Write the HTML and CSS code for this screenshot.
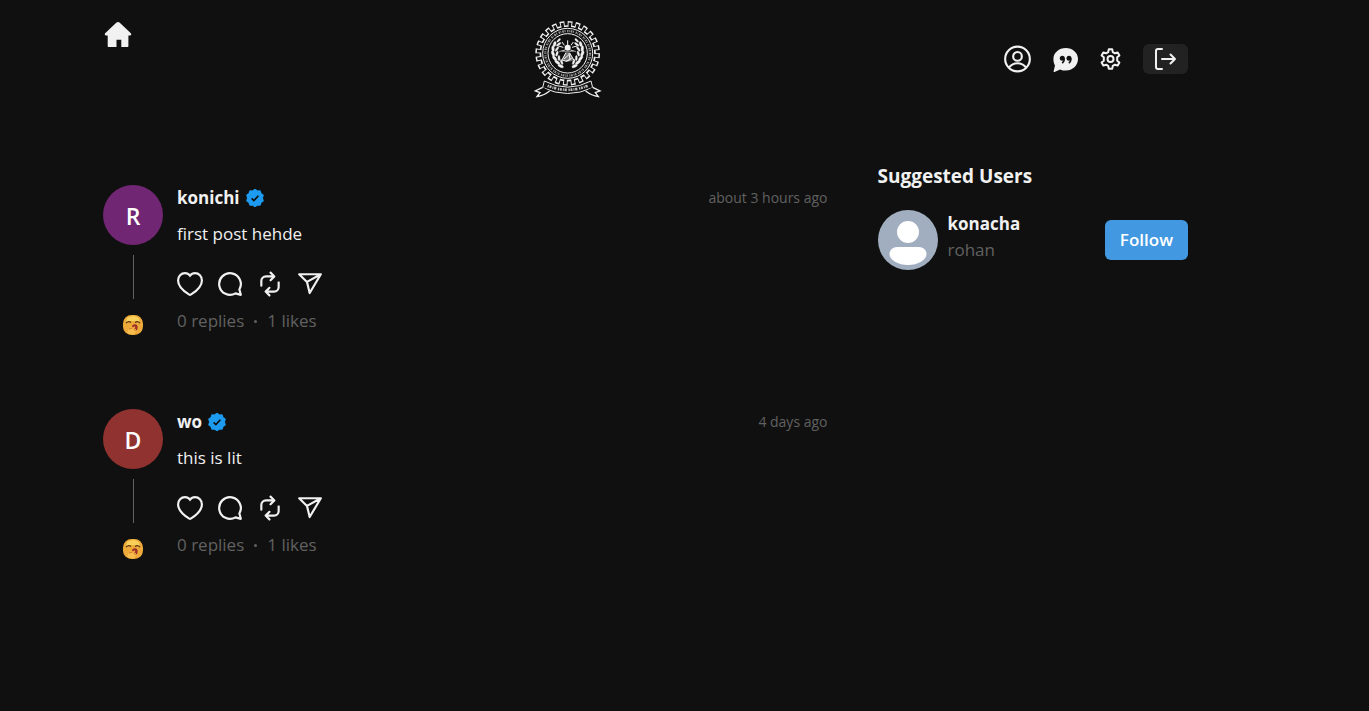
FILE: index.html
```html
<!DOCTYPE html>
<html lang="en">
<head>
<meta charset="utf-8">
<meta name="viewport" content="width=device-width, initial-scale=1">
<title>Home</title>
<link rel="stylesheet" href="styles.css">
</head>
<body>
<svg class="defs" aria-hidden="true">
  <symbol id="verified" viewBox="0 0 24 24"><path fill="#1d9bf0" d="M12 1l2.9 2.1 3.6-.1 1 3.4L22.4 8.500 21.200 12l1.200 3.500-2.900 2.100-1 3.400-3.600-.1L12 23l-2.900-2.100-3.600.1-1-3.400-2.900-2.100L2.800 12 1.600 8.500l2.900-2.100 1-3.400 3.600.1z" stroke="#1d9bf0" stroke-width="2.500" stroke-linejoin="round"/><path d="M7.500 12.500l3 3L16.500 9" fill="none" stroke="#101010" stroke-width="2.200"/></symbol>
  <symbol id="heart" viewBox="0 0 24 22"><path d="M1 7.66c0 4.575 3.899 9.086 9.987 12.934.338.203.74.406 1.013.406.283 0 .686-.203 1.013-.406C19.1 16.746 23 12.234 23 7.66 23 3.736 20.245 1 16.672 1 14.603 1 12.98 1.94 12 3.352 11.042 1.952 9.408 1 7.328 1 3.766 1 1 3.736 1 7.66Z" fill="none" stroke="currentColor" stroke-width="2"/></symbol>
  <symbol id="comment" viewBox="0 0 24 24"><path d="M20.656 17.008a9.993 9.993 0 1 0-3.59 3.615L22 22Z" fill="none" stroke="currentColor" stroke-width="2" stroke-linejoin="round"/></symbol>
  <symbol id="repost" viewBox="0 0 24 24"><path fill="currentColor" d="M19.998 9.497a1 1 0 0 0-1 1v4.228a3.274 3.274 0 0 1-3.27 3.27h-5.313l1.791-1.787a1 1 0 0 0-1.412-1.416L7.29 18.287a1.004 1.004 0 0 0-.294.707v.001c0 .023.012.042.013.065a.923.923 0 0 0 .281.643l3.502 3.504a1 1 0 0 0 1.414-1.414l-1.797-1.798h5.318a5.276 5.276 0 0 0 5.27-5.27v-4.228a1 1 0 0 0-1-1Zm-6.41-3.496-1.795 1.795a1 1 0 1 0 1.414 1.414l3.5-3.5a1.003 1.003 0 0 0 0-1.417l-3.5-3.5a1 1 0 0 0-1.414 1.414l1.794 1.794H8.27A5.277 5.277 0 0 0 3 9.271V13.5a1 1 0 0 0 2 0V9.271a3.275 3.275 0 0 1 3.271-3.27Z"/></symbol>
  <symbol id="share" viewBox="0 0 24 24"><path d="M22 3 9.218 10.083M11.698 20.334 22 3H2l7.218 7.084z" fill="none" stroke="currentColor" stroke-width="2" stroke-linejoin="round"/></symbol>
  <symbol id="yawn" viewBox="0 0 20 20"><rect width="20" height="20" rx="8.500" fill="#edaa38"/><path d="M4 3Q10-1 16 3L17 8Q10 4 3 8z" fill="#f8cf59"/><path d="M3 8q2.500-2.500 5-.6M12 7.400q2.500-1.900 5 .6" fill="none" stroke="#593316" stroke-width="1.300"/><ellipse cx="11.800" cy="12.500" rx="2.800" ry="3.200" fill="#9b3029"/><path d="M5 19q-1-5 2.500-6.500l4.500-1q1 1.200-1 1.800 2.500.5 2 2.200 0 2.500-3 4z" fill="#f6bd4c"/><path d="M6 14l4.500-1.300M11 14l1.500 2" stroke="#d67b2a" stroke-width="1" fill="none"/></symbol>
  <symbol id="leaves" viewBox="0 0 60 100"><g fill="#f1f1f1"><ellipse cx="31" cy="89" rx="9" ry="4" transform="rotate(25 31 89)"/><ellipse cx="21" cy="78" rx="9" ry="4" transform="rotate(35 21 78)"/><ellipse cx="13" cy="66" rx="9" ry="4" transform="rotate(50 13 66)"/><ellipse cx="8" cy="52" rx="9" ry="4" transform="rotate(66 8 52)"/><ellipse cx="8" cy="37" rx="9" ry="4" transform="rotate(86 8 37)"/><ellipse cx="13" cy="23" rx="8" ry="4" transform="rotate(108 13 23)"/><ellipse cx="34" cy="77" rx="8" ry="3" transform="rotate(70 34 77)"/><ellipse cx="26" cy="65" rx="8" ry="3" transform="rotate(88 26 65)"/><ellipse cx="20" cy="52" rx="8" ry="3" transform="rotate(108 20 52)"/><ellipse cx="20" cy="38" rx="8" ry="3" transform="rotate(125 20 38)"/><ellipse cx="25" cy="24" rx="8" ry="3" transform="rotate(142 25 24)"/><ellipse cx="25" cy="12" rx="7" ry="3" transform="rotate(135 25 12)"/></g></symbol>
</svg>
<div class="page">
  <header class="header">
    <a class="home" href="#" aria-label="Home"><svg viewBox="0 0 30 28"><path fill="currentColor" d="M15 2c.6 0 1 .2 1.500.6L27.600 13c1.200 1.200.7 2.400-.6 2.400h-1.600V26c0 .7-.4 1-1 1h-6.100v-7.200h-4.800V27H5.700c-.7 0-1-.4-1-1V15.400H3c-1.300 0-1.700-1.300-.6-2.400L13.500 2.600C14 2.200 14.400 2 15 2z"/></svg></a>
    <button class="logo" type="button" aria-label="Toggle theme">
      <svg viewBox="45 30 204 234" fill="none" stroke="#f1f1f1">
        <circle cx="143" cy="130" r="89" stroke-width="16" pathLength="240" stroke-dasharray="6 4"/>
        <circle cx="143" cy="130" r="82" stroke-width="5"/>
        <circle cx="143" cy="130" r="84" stroke="#101010" stroke-width="17" pathLength="240" stroke-dasharray="3.600 6.400" stroke-dashoffset="-1.200"/>
        <circle cx="143" cy="130" r="75" stroke-width="3"/>
        <circle cx="143" cy="130" r="67" stroke-width="7" stroke="#999" stroke-dasharray="4 2 2 3 5 2 3 5"/>
        <circle cx="143" cy="130" r="59" stroke-width="3"/>
        <use href="#leaves" x="91" y="79" width="60" height="100"/>
        <use href="#leaves" x="91" y="79" width="60" height="100" transform="translate(286 0) scale(-1 1)"/>
        <path d="M143 91v14M126 96l7 10M160 96l-7 10M115 108l15 4M171 108l-15 4M119 125l16-5M167 125l-16-5" stroke-width="3"/>
        <circle cx="143" cy="113" r="9" fill="#f1f1f1" stroke="none"/>
        <path d="M118 122h50v4h-50zM137 127h12l13 24q-20 8-38 0z" fill="#777" stroke="none"/>
        <path d="M138 128l-12 22q15 8 24-1l-3-20M149 129l13 22M132 147l16-14M138 154l17-9" stroke-width="3"/>
        <path d="M73 213q70 37 140 0l5 20q-75 35-150 0z" fill="#101010" stroke-width="3"/>
        <path d="M83 227q60 25 120 0" stroke="#bbb" stroke-width="8" stroke-dasharray="4 2 6 3 3 2 7 5"/>
        <path d="M68 232l-22 11 14 5-9 12q20-3 38-17M218 232l22 11-14 5 9 12q-20-3-38-17" fill="#101010" stroke-width="4"/>
      </svg>
    </button>
    <nav class="actions">
      <a href="#" aria-label="Profile"><svg width="27" height="28" viewBox="0 0 28 28" fill="none" stroke="currentColor" stroke-width="2.200"><circle cx="14" cy="14" r="12.800"/><circle cx="14" cy="11.300" r="4.500"/><path d="M5 23q3.500-4.600 9-4.600t9 4.600"/></svg></a>
      <a href="#" aria-label="Chat"><svg width="25" height="26" viewBox="0 0 25 26"><path fill="currentColor" d="M12.800 2C19.500 2 25 6.700 25 13s-5.500 11.600-12.200 11.600c-2.100 0-4-.4-5.700-1.200L1.500 26c-.7.200-1.100-.2-.9-.8L2 19.500C.9 17.600.4 15.400.4 13 .4 6.700 6 2 12.800 2z"/><g fill="#101010"><circle cx="9.300" cy="12.200" r="2.500"/><circle cx="16" cy="12.200" r="2.500"/></g><path d="M11.100 12.500q.4 3-2 4.500M17.800 12.500q.4 3-2 4.500" fill="none" stroke="#101010" stroke-width="1.500"/></svg></a>
      <a href="#" aria-label="Settings"><svg width="21" height="22" viewBox="0 0 21 22" fill="none" stroke="currentColor" stroke-width="2" stroke-linejoin="round"><path d="M8.800 1.200h3.400l.6 2.900 2.100 1.200 2.800-.9 1.700 3-2.200 1.900v3.400l2.200 1.900-1.700 3-2.800-.9-2.100 1.200-.6 2.900H8.800l-.6-2.900-2.100-1.200-2.800.9-1.700-3 2.200-1.900V9.300L1.600 7.400l1.700-3 2.800.9 2.100-1.200z"/><circle cx="10.500" cy="11" r="3"/></svg></a>
      <button class="logout" type="button" aria-label="Log out"><svg width="23" height="22" viewBox="0 0 23 22" fill="none" stroke="currentColor" stroke-width="2" stroke-linecap="round" stroke-linejoin="round"><path d="M8 1H4Q2 1 2 3v16q0 2 2 2h4M8 11h13M16.500 6.500 21 11l-4.500 4.500"/></svg></button>
    </nav>
  </header>
  <div class="columns">
    <main class="feed">
      <article class="post">
        <div class="rail">
          <div class="avatar purple">R</div>
          <div class="thread"></div>
          <svg class="emoji" role="img" aria-label="Yawning face"><use href="#yawn"/></svg>
        </div>
        <div class="content">
          <div class="byline"><a class="name" href="#">konichi</a><svg class="badge" role="img" aria-label="Verified"><use href="#verified"/></svg><time class="time">about 3 hours ago</time></div>
          <p class="text">first post hehde</p>
          <div class="tools">
            <button type="button" aria-label="Like"><svg class="heart"><use href="#heart"/></svg></button>
            <button type="button" aria-label="Comment"><svg><use href="#comment"/></svg></button>
            <button type="button" aria-label="Repost"><svg><use href="#repost"/></svg></button>
            <button type="button" aria-label="Share"><svg><use href="#share"/></svg></button>
          </div>
          <div class="stats"><span>0 replies</span><i class="dot"></i><span>1 likes</span></div>
        </div>
      </article>
      <article class="post">
        <div class="rail">
          <div class="avatar red">D</div>
          <div class="thread"></div>
          <svg class="emoji" role="img" aria-label="Yawning face"><use href="#yawn"/></svg>
        </div>
        <div class="content">
          <div class="byline"><a class="name" href="#">wo</a><svg class="badge" role="img" aria-label="Verified"><use href="#verified"/></svg><time class="time">4 days ago</time></div>
          <p class="text">this is lit</p>
          <div class="tools">
            <button type="button" aria-label="Like"><svg class="heart"><use href="#heart"/></svg></button>
            <button type="button" aria-label="Comment"><svg><use href="#comment"/></svg></button>
            <button type="button" aria-label="Repost"><svg><use href="#repost"/></svg></button>
            <button type="button" aria-label="Share"><svg><use href="#share"/></svg></button>
          </div>
          <div class="stats"><span>0 replies</span><i class="dot"></i><span>1 likes</span></div>
        </div>
      </article>
    </main>
    <aside class="suggested">
      <h2 class="heading">Suggested Users</h2>
      <div class="user">
        <svg class="person" viewBox="0 0 60 60" aria-hidden="true"><circle cx="30" cy="30" r="30" fill="#a0aec0"/><circle cx="30" cy="22" r="11" fill="#fff"/><path fill="#fff" d="M19 37h22c4 0 7.500 3 7.500 7 0 6-8.500 11-18.500 11s-18.500-5-18.500-11c0-4 3.500-7 7.500-7z"/></svg>
        <div class="who"><a class="name" href="#">konacha</a><span class="handle">rohan</span></div>
        <button class="follow" type="button">Follow</button>
      </div>
    </aside>
  </div>
</div>
</body>
</html>
```
FILE: styles.css
```css
* { box-sizing: border-box; }
body {
  margin: 0;
  min-height: 100vh;
  background: #101010;
  color: #f1f1f1;
  font: 17px/24px "Segoe UI", "Open Sans", "Noto Sans", sans-serif;
}
a { color: inherit; text-decoration: none; }
button { padding: 0; border: 0; background: none; color: inherit; font: inherit; cursor: pointer; }
svg { display: block; overflow: visible; }
.defs { position: absolute; width: 0; height: 0; }
.page { padding: 20px 181px 40px 103px; }

.header { display: flex; justify-content: space-between; height: 78px; margin-bottom: 64px; }
.home svg { width: 30px; height: 28px; }
.logo svg { width: 68px; height: 78px; }
.actions { display: flex; align-items: center; gap: 22px; }
.logout { display: grid; place-items: center; width: 45px; height: 30px; border-radius: 6px; background: #222; }

.columns { display: grid; grid-template-columns: 7fr 3fr; gap: 50px; align-items: start; }
.feed { display: grid; gap: 74px; padding-top: 23px; }
.post { display: flex; gap: 14px; height: 150px; }
.rail { display: flex; flex-direction: column; align-items: center; gap: 10px; width: 60px; }
.avatar { display: grid; place-items: center; width: 60px; height: 60px; padding-top: 2px; border-radius: 50%; color: #fff; font-size: 23px; font-weight: 600; }
.purple { background: #702673; }
.red { background: #903230; }
.thread { flex: 1; width: 1px; background: #616161; }
.emoji { width: 20px; height: 20px; margin-top: 6px; }
.content { flex: 1; min-width: 0; }
.byline { display: flex; align-items: center; height: 26px; }
.name { font-weight: 700; }
.badge { width: 18px; height: 18px; margin-left: 6px; }
.time { margin-left: auto; color: #616161; font-size: 14px; }
.text { margin: 11px 0 25px; }
.tools { display: flex; gap: 14px; height: 26px; }
.tools button { display: grid; place-items: center; width: 26px; }
.tools svg { width: 26px; height: 26px; }
.tools .heart { height: 24px; }
.stats { display: flex; align-items: center; margin-top: 12px; color: #616161; }
.dot { width: 3px; height: 3px; margin: 0 10px; border-radius: 50%; background: #616161; }

.heading { margin: 0 0 20px; font-size: 19px; line-height: 28px; font-weight: 700; }
.user { display: flex; align-items: center; gap: 10px; }
.person { width: 60px; height: 60px; }
.who { display: grid; gap: 2px; margin-right: auto; padding-bottom: 6px; }
.handle { color: #616161; }
.follow { height: 40px; padding: 0 15px; border-radius: 6px; background: #4299e1; color: #fff; font-weight: 600; }
```
